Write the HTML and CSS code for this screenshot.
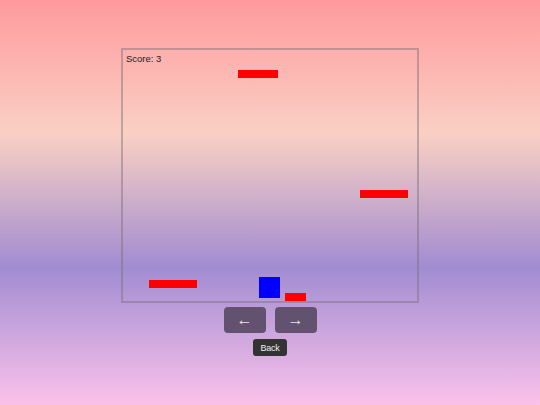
FILE: index.html
```html
<!DOCTYPE html>
<html>
<head>
<meta charset="utf-8">
<link rel="stylesheet" href="styles.css">
</head>
<body>
<div class="page">
  <div class="game">
    <div class="score">Score: 3</div>
    <div class="obstacle" style="left:115px;top:20px;width:40px"></div>
    <div class="obstacle" style="left:237px;top:140px;width:48px"></div>
    <div class="obstacle" style="left:26px;top:230px;width:48px"></div>
    <div class="obstacle" style="left:162px;top:243px;width:21px"></div>
    <div class="player" style="left:136px;top:227px"></div>
  </div>
  <div class="controls">
    <button class="arrow">&larr;</button>
    <button class="arrow">&rarr;</button>
  </div>
  <button class="back">Back</button>
</div>
</body>
</html>
```
FILE: styles.css
```css
html, body {
  margin: 0;
  padding: 0;
}
body {
  width: 540px;
  height: 405px;
  overflow: hidden;
  background: linear-gradient(to bottom, #ff9a9e 0%, #fad0c4 33%, #a18cd1 66%, #fbc2eb 100%);
  font-family: "Liberation Sans", Arial, sans-serif;
}
.page {
  display: flex;
  flex-direction: column;
  align-items: center;
  padding-top: 48px;
}
.game {
  position: relative;
  width: 294px;
  height: 251px;
  border: 2px solid rgba(120, 110, 120, 0.45);
  overflow: hidden;
}
.score {
  position: absolute;
  left: 3px;
  top: 3px;
  font-size: 9.5px;
  color: #222;
}
.obstacle {
  position: absolute;
  height: 8px;
  background: #ff0000;
}
.player {
  position: absolute;
  width: 21px;
  height: 21px;
  background: #0000ff;
}
.controls {
  display: flex;
  gap: 9px;
  margin-top: 4px;
}
.arrow {
  width: 42px;
  height: 26px;
  border: none;
  border-radius: 4px;
  background: #62526f;
  color: #e8e4ec;
  font-family: "Liberation Sans", Arial, sans-serif;
  font-size: 16px;
  padding: 0;
  line-height: 26px;
}
.back {
  margin-top: 6px;
  width: 34px;
  height: 17px;
  border: none;
  border-radius: 3px;
  background: #333;
  color: #eee;
  font-family: "Liberation Sans", Arial, sans-serif;
  font-size: 9px;
  letter-spacing: -0.3px;
  padding: 0;
}
```
